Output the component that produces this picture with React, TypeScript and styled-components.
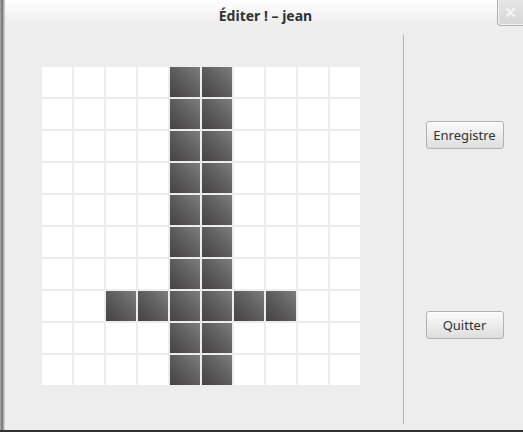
import React from "react";
import styled, { createGlobalStyle } from "styled-components";

const Global = createGlobalStyle`
  html, body { margin: 0; padding: 0; }
  body {
    width: 523px;
    height: 432px;
    overflow: hidden;
    font-family: "Noto Sans", "DejaVu Sans", sans-serif;
  }
`;

const Page = styled.div`
  width: 523px;
  height: 432px;
  display: flex;
  align-items: flex-start;
  background:
    linear-gradient(to bottom, transparent 430px, #2f3330 430px),
    linear-gradient(to right, #b4b4b4 0px, #6e6e6e 2px, #8e8e8e 3px, #cfcfcf 4px);
`;

const Window = styled.div`
  margin-left: 4px;
  width: 519px;
  height: 430px;
  display: flex;
  flex-direction: column;
  background: #ededed;
  border-left: 1px solid #c8c8c8;
  box-sizing: border-box;
`;

const TitleBar = styled.div`
  position: relative;
  height: 30px;
  flex: none;
  display: flex;
  align-items: center;
  justify-content: center;
  background: linear-gradient(to bottom, #ffffff, #efefef 70%, #ededed);
`;

const Title = styled.div`
  font-weight: bold;
  font-size: 14px;
  color: #2e3436;
  padding-left: 3px;
  padding-top: 1px;
`;

const CloseButton = styled.div`
  position: absolute;
  top: 0;
  right: 0;
  width: 26px;
  height: 26px;
  box-sizing: border-box;
  border-left: 1px solid #b0b0b0;
  border-bottom: 1px solid #b0b0b0;
  border-bottom-left-radius: 4px;
  background: linear-gradient(to bottom, #e6e6e6, #d6d6d6);
  display: flex;
  align-items: center;
  justify-content: center;
  box-shadow: inset 1px -1px 0 #f3f3f3;
`;

const Body = styled.div`
  flex: 1;
  display: flex;
  padding: 5px 0 6px 0;
`;

const BoardArea = styled.div`
  width: 399px;
  padding: 32px 0 0 37px;
  box-sizing: border-box;
  border-right: 1px solid #b3b3b3;
`;

const Board = styled.div`
  display: grid;
  grid-template-columns: repeat(10, 30px);
  grid-auto-rows: 30px;
  gap: 2px;
  width: fit-content;
`;

const Cell = styled.div<{ $on: boolean }>`
  background: ${(p) =>
    p.$on
      ? "linear-gradient(to bottom left, #7d7d7d 0%, #5e5d5d 50%, #434141 100%)"
      : "#ffffff"};
`;

const Side = styled.div`
  flex: 1;
  display: grid;
  grid-template-rows: 1fr 1fr;
  justify-items: center;
  align-items: center;
  padding: 5px 0 4px;
`;

const Button = styled.button`
  width: 78px;
  height: 28px;
  box-sizing: border-box;
  border: 1px solid #b2b2b2;
  border-radius: 3px;
  background: linear-gradient(to bottom, #fbfbfb, #e9e9e9 60%, #dedede);
  color: #2e3436;
  font-family: "Noto Sans", "DejaVu Sans", sans-serif;
  font-size: 13px;
  padding: 0 4px;
  box-shadow: inset 0 1px 0 #ffffff;
  margin-left: 2px;
`;

const isOn = (r: number, c: number) => c === 4 || c === 5 || (r === 7 && c >= 2 && c <= 7);

export default function App() {
  const cells = [];
  for (let r = 0; r < 10; r++) {
    for (let c = 0; c < 10; c++) {
      cells.push(<Cell key={`${r}-${c}`} $on={isOn(r, c)} />);
    }
  }
  return (
    <>
      <Global />
      <Page>
        <Window>
          <TitleBar>
            <Title>Éditer ! – jean</Title>
            <CloseButton>
              <svg width="9" height="9" viewBox="0 0 9 9">
                <path d="M1 1 L8 8 M8 1 L1 8" stroke="#f4f4f4" strokeWidth="2.2" strokeLinecap="round" />
              </svg>
            </CloseButton>
          </TitleBar>
          <Body>
            <BoardArea>
              <Board>{cells}</Board>
            </BoardArea>
            <Side>
              <Button>Enregistre</Button>
              <Button>Quitter</Button>
            </Side>
          </Body>
        </Window>
      </Page>
    </>
  );
}
